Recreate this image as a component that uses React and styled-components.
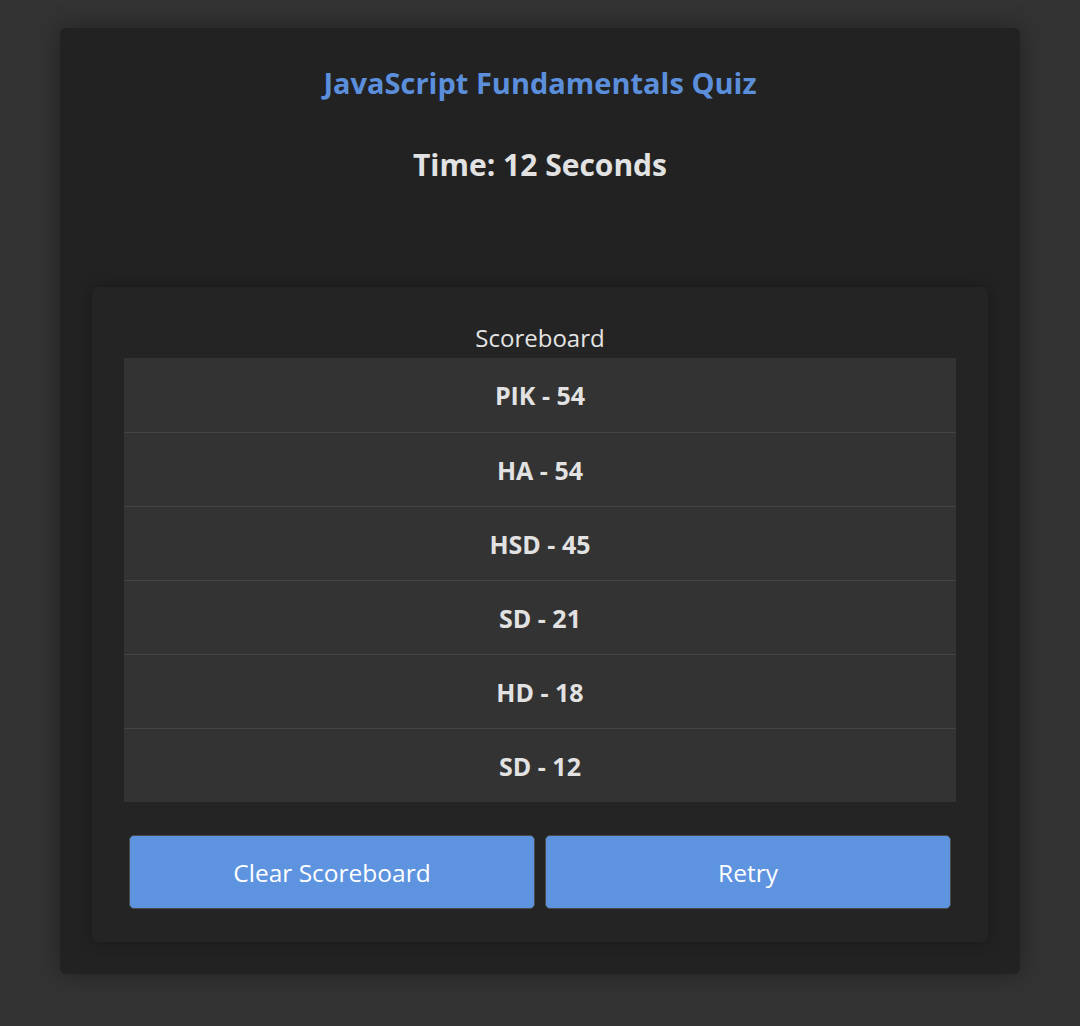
import React from "react";
import styled, { createGlobalStyle } from "styled-components";

const GlobalStyle = createGlobalStyle`
  html, body {
    margin: 0;
    padding: 0;
    background: #333333;
    font-family: "Open Sans", "Lato", sans-serif;
    color: #e0e0e0;
  }
  #root {
    min-height: 1026px;
    padding: 28px 0 1px;
    box-sizing: border-box;
  }
`;

const Shell = styled.main`
  width: 960px;
  margin: 0 auto;
  box-sizing: border-box;
  padding: 32px;
  background: #222222;
  border-radius: 6px;
  box-shadow: 0 0 24px rgba(0, 0, 0, 0.35);
`;

const Title = styled.h1`
  margin: 5px 0 0;
  font-size: 29px;
  line-height: 36px;
  font-weight: 700;
  text-align: center;
  color: #5b8fdc;
`;

const Timer = styled.h2`
  margin: 44px 0 0;
  font-size: 30px;
  line-height: 40px;
  font-weight: 700;
  text-align: center;
  color: #e2e2e2;
`;

const Board = styled.section`
  margin-top: 102px;
  padding: 31px 32px 33px;
  background: #242424;
  border-radius: 6px;
  box-shadow: 0 0 14px rgba(0, 0, 0, 0.3);
`;

const BoardLabel = styled.div`
  height: 40px;
  line-height: 40px;
  text-align: center;
  font-size: 24px;
  color: #e4e4e4;
`;

const ScoreList = styled.ul`
  list-style: none;
  margin: 0;
  padding: 0;
`;

const ScoreRow = styled.li`
  height: 74px;
  line-height: 74px;
  box-sizing: border-box;
  text-align: center;
  background: #333333;
  border-top: ${({ $first }) => ($first ? "none" : "1px solid #444444")};
  font-size: 25px;
  font-weight: 700;
  color: #e2e2e2;
`;

const Actions = styled.div`
  display: grid;
  grid-template-columns: 1fr 1fr;
  gap: 10px;
  padding: 33px 5px 0;
`;

const ActionButton = styled.button`
  height: 74px;
  border: 1px solid #4a4a4a;
  border-radius: 5px;
  background: #5e93e0;
  color: #ffffff;
  font-family: inherit;
  font-size: 24.5px;
  font-weight: 500;
  cursor: pointer;
`;

const scores = [
  { name: "PIK", score: 54 },
  { name: "HA", score: 54 },
  { name: "HSD", score: 45 },
  { name: "SD", score: 21 },
  { name: "HD", score: 18 },
  { name: "SD", score: 12 },
];

export default function App() {
  return (
    <>
      <GlobalStyle />
      <Shell>
        <Title>JavaScript Fundamentals Quiz</Title>
        <Timer>Time: 12 Seconds</Timer>
        <Board>
          <BoardLabel>Scoreboard</BoardLabel>
          <ScoreList>
            {scores.map((s, i) => (
              <ScoreRow key={i} $first={i === 0}>
                {s.name} - {s.score}
              </ScoreRow>
            ))}
          </ScoreList>
          <Actions>
            <ActionButton type="button">Clear Scoreboard</ActionButton>
            <ActionButton type="button">Retry</ActionButton>
          </Actions>
        </Board>
      </Shell>
    </>
  );
}
